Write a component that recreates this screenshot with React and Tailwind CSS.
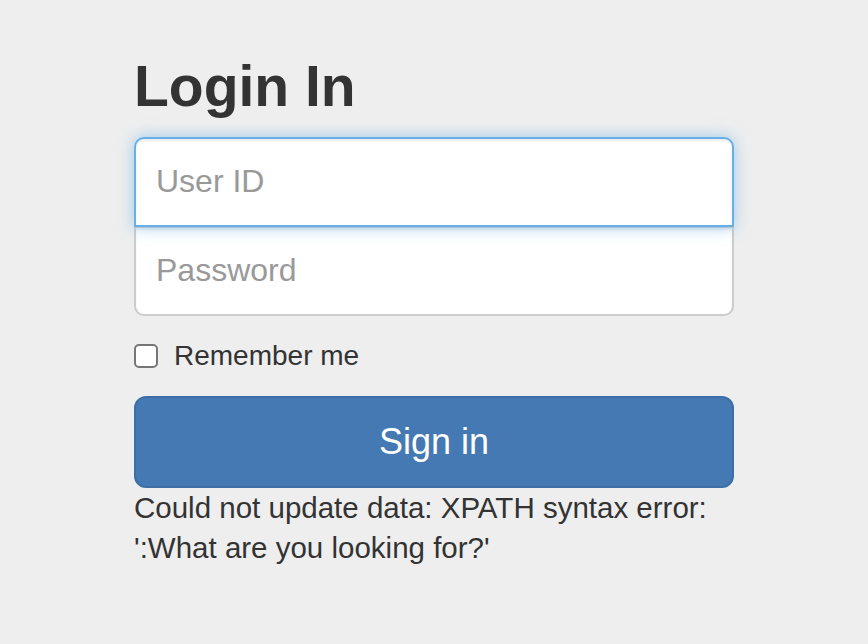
import React, { useState } from 'react';

export default function App() {
  const [userId, setUserId] = useState('');
  const [password, setPassword] = useState('');
  const [remember, setRemember] = useState(false);

  return (
    <div className="min-h-[644px] w-full bg-[#eeeeee] text-[#333333] [font-family:'Liberation_Sans',Arial,sans-serif]">
      <form
        onSubmit={(e) => e.preventDefault()}
        className="mx-auto flex w-[600px] flex-col pt-[55px]"
      >
        <h2 className="mb-[19px] text-[57px] font-bold leading-[1.1] text-[#333333]">Login In</h2>

        <input
          type="text"
          value={userId}
          onChange={(e) => setUserId(e.target.value)}
          placeholder="User ID"
          className="relative z-10 h-[90px] w-full rounded-t-[10px] border-2 border-[#66afe9] bg-white px-[20px] text-[32px] text-[#555555] shadow-[inset_0_2px_2px_rgba(0,0,0,0.075),0_0_16px_rgba(102,175,233,0.6)] outline-none placeholder:text-[#999999]"
        />
        <input
          type="password"
          value={password}
          onChange={(e) => setPassword(e.target.value)}
          placeholder="Password"
          className="-mt-[1px] h-[90px] w-full rounded-b-[10px] border-2 border-[#cccccc] bg-white px-[20px] text-[32px] text-[#555555] shadow-[inset_0_2px_2px_rgba(0,0,0,0.075)] outline-none placeholder:text-[#999999]"
        />

        <label className="mt-[20px] mb-[20px] flex h-[40px] cursor-pointer items-center gap-[16px] text-[28px]">
          <input
            type="checkbox"
            checked={remember}
            onChange={(e) => setRemember(e.target.checked)}
            className="h-[24px] w-[24px] appearance-none rounded-[5px] border-2 border-[#767676] bg-white checked:bg-[#4479b3]"
          />
          <span>Remember me</span>
        </label>

        <button
          type="submit"
          className="h-[92px] w-full rounded-[12px] border-2 border-[#3d6ea6] bg-[#4479b3] text-[36px] text-white"
        >
          Sign in
        </button>

        <p className="text-[29.5px] leading-[40px] text-[#333333]">
          Could not update data: XPATH syntax error:
          <br />
          ':What are you looking for?'
        </p>
      </form>
    </div>
  );
}
